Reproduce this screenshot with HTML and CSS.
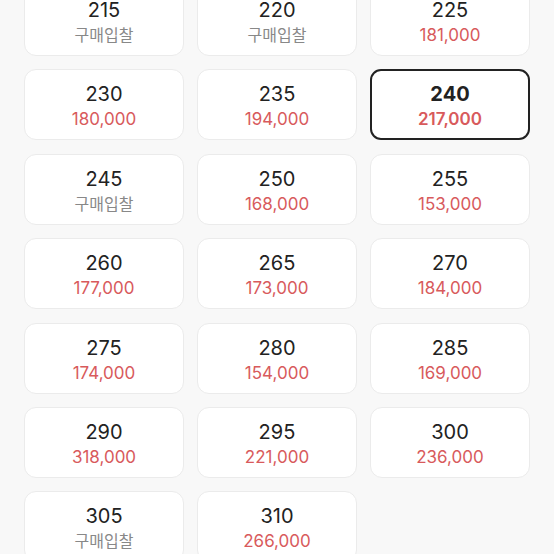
FILE: index.html
```html
<!DOCTYPE html>
<html lang="ko">
<head>
<meta charset="utf-8">
<link rel="stylesheet" href="styles.css">
</head>
<body>
<div class="grid">
  <div class="card"><div class="size">215</div><div class="bid">구매입찰</div></div>
  <div class="card"><div class="size">220</div><div class="bid">구매입찰</div></div>
  <div class="card"><div class="size">225</div><div class="price">181,000</div></div>
  <div class="card"><div class="size">230</div><div class="price">180,000</div></div>
  <div class="card"><div class="size">235</div><div class="price">194,000</div></div>
  <div class="card selected"><div class="size">240</div><div class="price">217,000</div></div>
  <div class="card"><div class="size">245</div><div class="bid">구매입찰</div></div>
  <div class="card"><div class="size">250</div><div class="price">168,000</div></div>
  <div class="card"><div class="size">255</div><div class="price">153,000</div></div>
  <div class="card"><div class="size">260</div><div class="price">177,000</div></div>
  <div class="card"><div class="size">265</div><div class="price">173,000</div></div>
  <div class="card"><div class="size">270</div><div class="price">184,000</div></div>
  <div class="card"><div class="size">275</div><div class="price">174,000</div></div>
  <div class="card"><div class="size">280</div><div class="price">154,000</div></div>
  <div class="card"><div class="size">285</div><div class="price">169,000</div></div>
  <div class="card"><div class="size">290</div><div class="price">318,000</div></div>
  <div class="card"><div class="size">295</div><div class="price">221,000</div></div>
  <div class="card"><div class="size">300</div><div class="price">236,000</div></div>
  <div class="card"><div class="size">305</div><div class="bid">구매입찰</div></div>
  <div class="card"><div class="size">310</div><div class="price">266,000</div></div>
</div>
</body>
</html>
```
FILE: styles.css
```css
html, body {
  margin: 0;
  padding: 0;
  background: #f8f8f8;
}
body {
  font-family: "Inter", "Noto Sans CJK KR", sans-serif;
  overflow: hidden;
}
.grid {
  display: grid;
  grid-template-columns: repeat(3, 160px);
  grid-auto-rows: 71px;
  column-gap: 13px;
  row-gap: 13.4px;
  padding: 0 24px;
  margin-top: -15px;
}
.card {
  box-sizing: border-box;
  background: #fff;
  border: 1px solid #ebebeb;
  border-radius: 12px;
  display: flex;
  flex-direction: column;
  align-items: center;
  justify-content: center;
  padding-top: 3px;
}
.card.selected {
  border: 2px solid #222;
  border-radius: 11px;
}
.size {
  font-size: 20px;
  line-height: 26px;
  color: #222;
}
.selected .size {
  font-weight: 700;
}
.price {
  font-size: 17px;
  line-height: 24px;
  color: #d85a5c;
}
.selected .price {
  font-weight: 600;
}
.bid {
  font-size: 16px;
  line-height: 24px;
  color: #888;
}
```
